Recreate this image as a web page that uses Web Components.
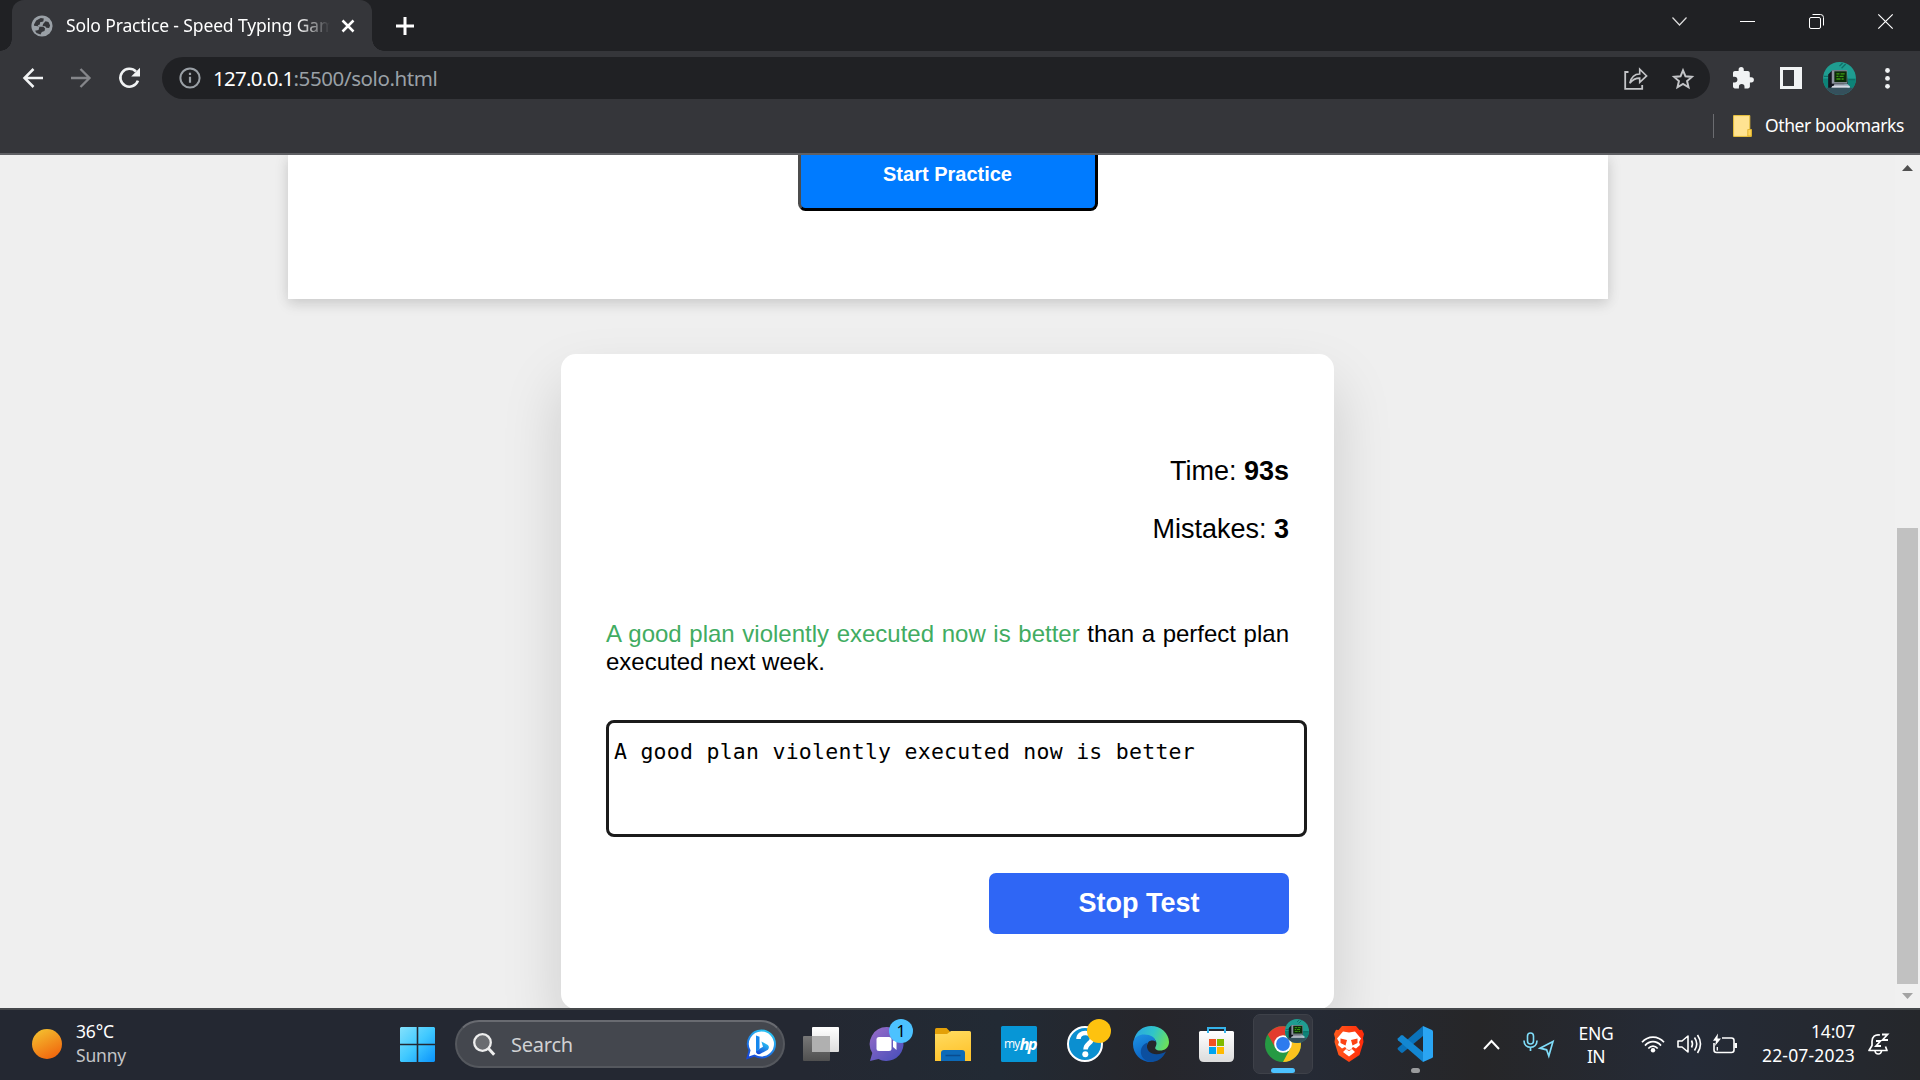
<!DOCTYPE html>
<html lang="en">
<head>
<meta charset="utf-8">
<title>Solo Practice - Speed Typing Game</title>
<style>
  html, body { margin: 0; height: 100%; overflow: hidden; background: #efefef; }
  body { font-family: "Noto Sans", "Open Sans", sans-serif; }
</style>
</head>
<body>
<desktop-screen></desktop-screen>
<script>
const define = (name, html, after) => {
  const tpl = document.createElement('template');
  tpl.innerHTML = html;
  customElements.define(name, class extends HTMLElement {
    connectedCallback() {
      if (this.shadowRoot) return;
      this.attachShadow({ mode: 'open' }).append(tpl.content.cloneNode(true));
      if (after) after(this);
    }
  });
};

const avatar = (id) => `
  <defs><clipPath id="${id}"><circle cx="16" cy="16" r="16"/></clipPath></defs>
  <g clip-path="url(#${id})">
    <rect width="32" height="32" fill="#1f9d91"/>
    <path d="M0 16h32v9H0z" fill="#0d8378"/><path d="M0 25h32v7H0z" fill="#35505c"/>
    <path d="M16 4l3-3M18 6l4-4M5 14H1M25 17h6" stroke="#0f6f68" stroke-width="1.2"/>
    <path d="M5 12l4-4h14l1 13h-4l4 4H5z" fill="#14161f"/>
    <rect x="8.500" y="8" width="15" height="13" fill="#8d93a0"/>
    <rect x="11" y="9" width="12" height="10.500" fill="#0b2a08"/>
    <path d="M13 11.500h3m1 0h4M13 14h2m1 0h4M13 16.500h4m1 0h2" stroke="#3d9b12" stroke-width="1.300"/>
    <path d="M11 21.500h13l2 2H10z" fill="#aeb6c4"/><path d="M9 23.300h17v1.700H8z" fill="#d5dae4"/>
  </g>`;

const ICONS = {
  globe: [22, 22, `<circle cx="11" cy="11" r="10.600" fill="#9aa0a6"/><path d="M3 9.500L5.200 5.600 9.800 3l3 .6-.5 2.800-3.200.8-.3 2.300-2 .8 1 1.400h4.600l1.700 1.700-.6 2.600-2.700.9-1.300 2.600-4-1.400L3 14zM14.500 6.300l3 .6 1.600 3.600-1 2.600-2.700-.3-1.200-1.600-2.600-.3.500-2z" fill="#35363a"/><path d="M1.500 10.500l7 1-1 3.500-4.500 1z" fill="#9aa0a6"/>`],
  tabclose: [14, 14, `<path d="M1.500 1.500l11 11M12.500 1.500l-11 11" stroke="#fff" stroke-width="2.500"/>`],
  plus: [18, 18, `<path d="M9 0v18M0 9h18" stroke="#fff" stroke-width="3"/>`],
  back: [20, 20, `<path d="M20 10H2M10.500 1L1.500 10l9 9" stroke="#f1f3f4" stroke-width="2.500" fill="none"/>`],
  forward: [20, 20, `<path d="M0 10h18M9.500 1l9 9-9 9" stroke="#85868a" stroke-width="2.300" fill="none"/>`],
  reload: [22, 22, `<path d="M18.900 13.600A9 9 0 1 1 17 4.600" stroke="#f1f3f4" stroke-width="2.600" fill="none"/><path d="M21 .8v8.700h-8.800z" fill="#f1f3f4"/>`],
  info: [22, 22, `<circle cx="11" cy="11" r="9.600" stroke="#9aa0a6" stroke-width="2" fill="none"/><path d="M11 9.700v6M11 5.800v2.200" stroke="#9aa0a6" stroke-width="2.200"/>`],
  share: [24, 23, `<path d="M4.500 5H1.200v16.800h17V18" stroke="#c4c5c8" stroke-width="1.800" fill="none"/><path d="M5.800 16.200C7.200 9.800 11 7 15.700 7V2.200l6.900 6.700-6.900 6.400v-4.200c-4.200 0-7.200 1.500-9.900 5.100z" stroke="#c4c5c8" stroke-width="1.600" fill="none"/>`],
  star: [22, 21, `<path d="M11 2.400l2.500 5.900 6.400.6-4.800 4.200 1.400 6.200L11 16l-5.500 3.300 1.400-6.200-4.800-4.200 6.400-.6z" stroke="#c4c5c8" stroke-width="2" fill="none"/>`],
  puzzle: [22, 22, `<path d="M19.300 10.200h-1.500V6c0-1.200-.9-2-2-2h-4V2.700a2.600 2.600 0 0 0-5.200 0V4H2.900C1.800 4 1 4.800 1 6v3.700h1.500a2.900 2.900 0 0 1 0 5.800H1v4c0 1.100.8 1.900 1.900 1.900h4v-1.500a2.800 2.800 0 0 1 5.600 0v1.500h3.400c1.100 0 2-.8 2-1.900v-4.100h1.400a2.600 2.600 0 0 0 0-5.200z" fill="#f1f3f4"/>`],
  panel: [22, 22, `<path d="M0 0h22v22H0zM3 3v16h11V3z" fill="#f1f3f4" fill-rule="evenodd"/>`],
  profile: [33, 33, avatar('a'), '0 0 32 32'],
  dots: [5, 21, `<circle cx="2.500" cy="2.500" r="2.400" fill="#f1f3f4"/><circle cx="2.500" cy="10.400" r="2.400" fill="#f1f3f4"/><circle cx="2.500" cy="18.300" r="2.400" fill="#f1f3f4"/>`],
  bookmark: [19, 22, `<path d="M.6.6h16.200v14h1.500v6.800H.6z" fill="#ffe391" stroke="#ecc43c"/><path d="M14.800 21v-6.500h3.500V21z" fill="#ffd75e" stroke="#d9ab22" stroke-width=".8"/>`],
  search: [15, 9, `<path d="M.5.5l7 7.500 7-7.500" stroke="#ddd" stroke-width="1.200" fill="none"/>`],
  min: [15, 15, `<path d="M0 7.500h15" stroke="#fff"/>`],
  restore: [15, 15, `<rect x=".5" y="3.500" width="11" height="11" rx="1.500" stroke="#fff" fill="none"/><path d="M3.500.5h8a3 3 0 0 1 3 3v8" stroke="#fff" fill="none"/>`],
  close: [15, 15, `<path d="M.3.300l14.400 14.400M14.700.3L.3 14.700" stroke="#fff" stroke-width="1.200"/>`],
  sun: [30, 30, `<defs><linearGradient id="g" x1=".2" y1="0" x2=".7" y2="1"><stop stop-color="#f4c02f"/><stop offset="1" stop-color="#f1650d"/></linearGradient></defs><circle cx="15" cy="15" r="15" fill="url(#g)"/>`],
  windows: [35, 35, `<defs><linearGradient id="g" gradientUnits="userSpaceOnUse" x1="0" y1="0" x2="35" y2="35"><stop stop-color="#84e1fc"/><stop offset=".5" stop-color="#40c9ff"/><stop offset="1" stop-color="#0a93fb"/></linearGradient></defs><path d="M1 0h15.700v16.700H0V1zM18.300 0H34l1 1v15.700H18.300zM0 18.300h16.700V35H1l-1-1zM18.300 18.300H35V34l-1 1H18.300z" fill="url(#g)"/>`],
  find: [22, 23, `<circle cx="9.500" cy="9.500" r="8.300" fill="#6a6c70" stroke="#eee" stroke-width="2.300"/><path d="M15.500 15.500l5.700 6.200" stroke="#eee" stroke-width="3"/>`],
  bing: [30, 31, `<defs><linearGradient id="g" x1=".7" y1="0" x2=".2" y2="1"><stop stop-color="#29c5f5"/><stop offset="1" stop-color="#1648d8"/></linearGradient></defs><path d="M15.500 1.500a13.500 13.500 0 0 1 0 27c-2.600 0-5-.7-7-1.900l-7 2.300 2-7.500a13.500 13.500 0 0 1 12-19.900z" fill="#fff" stroke="url(#g)" stroke-width="2"/><path d="M10 6.500l3.500 1.200v12l-3.500 4z" fill="#1688ee"/><path d="M10 22.800l4-3.200 3-1.800-1.600-5.300 6 3.200c2 1.200 1.800 3.600.5 5L14 25c-2 .8-3.600 0-4-2.200z" fill="url(#g)"/>`],
  taskview: [36, 36, `<defs><linearGradient id="g" x2="0" y2="1"><stop stop-color="#fff"/><stop offset="1" stop-color="#ddd"/></linearGradient><linearGradient id="h" x2="0" y2="1"><stop stop-color="#777"/><stop offset="1" stop-color="#505050"/></linearGradient></defs><rect x="0" y="10" width="27" height="25" rx="1" fill="url(#h)"/><rect x="9" y="1" width="27" height="25" rx="1" fill="url(#g)"/><rect x="9" y="10" width="18" height="16" fill="#b0b0b0"/>`],
  teams: [36, 36, `<defs><linearGradient id="g" x2=".8" y2="1"><stop stop-color="#9a6cc8"/><stop offset="1" stop-color="#4b50bb"/></linearGradient></defs><path d="M18 1a17 17 0 1 1-8.500 32L1 35l2.300-8A17 17 0 0 1 18 1z" fill="url(#g)"/><rect x="7.500" y="11" width="15" height="14" rx="2.500" fill="#fff"/><path d="M24 15l3.500-3v12L24 21z" fill="#fff"/>`],
  explorer: [36, 36, `<defs><linearGradient id="g" x2=".3" y2="1"><stop stop-color="#ffdc62"/><stop offset="1" stop-color="#ffc42e"/></linearGradient></defs><path d="M0 3.500Q0 2 1.500 2h10L15 5.500V12H0z" fill="#e3a008"/><path d="M0 8h12l4-3h18.500Q36 5 36 6.500V35H0z" fill="url(#g)"/><path d="M6 35v-8q0-3 3-3h18q3 0 3 3v8z" fill="#0d6ab8"/><path d="M10.500 29.500h15" stroke="#0a4c8f" stroke-width="1.500"/>`],
  hp: [36, 36, `<rect width="36" height="36" rx="1.500" fill="#0796d6"/>`],
  help: [36, 36, `<circle cx="18" cy="18" r="17" fill="#0b8fd0" stroke="#fff" stroke-width="2"/><path d="M11.500 13c0-8 13.500-8 13.500-.5 0 4.800-6.500 5-6.500 11" stroke="#fff" stroke-width="4.500" fill="none"/><circle cx="18.300" cy="28.300" r="3" fill="#fff"/><circle cx="32" cy="5" r="12" fill="#fec20f"/>`],
  edge: [36, 36, `<defs><linearGradient id="g" x1="0" y1=".3" x2="1" y2=".6"><stop stop-color="#2aa6e2"/><stop offset=".5" stop-color="#30c5c9"/><stop offset="1" stop-color="#6ce05a"/></linearGradient><linearGradient id="h" x2=".4" y2="1"><stop stop-color="#1e93e4"/><stop offset="1" stop-color="#0a5fc0"/></linearGradient></defs><path d="M1 14C3 5 10 0 18 0c10 0 18 7.500 18 16 0 6-4.500 8.500-9 8.500-4 0-5.500-2-4.500-3.500 3-5-1-10.500-8-10.500C7 10.500 3 12 1 14z" fill="url(#g)"/><path d="M0 18C0 11 6 8.500 11.500 8.500c6 0 10.800 3 11.300 7.300C21 14 17 14 15.500 16c-5 7 2 15.500 9 15.500-2 3-4.500 4.500-6.500 4.500C7.500 36 0 28 0 18z" fill="url(#h)"/><path d="M14.500 16.500C11 28 24 31 33 25.500 30 32 24.500 36 18 36 10 35 6 28 8.500 22c1-2.500 3-4.500 6-5.500z" fill="#0c4f9f"/>`],
  store: [36, 36, `<defs><linearGradient id="g" x2="0" y2="1"><stop stop-color="#fff"/><stop offset="1" stop-color="#dcdcdc"/></linearGradient></defs><path d="M9 9V2h17v7" stroke="#35b3ea" stroke-width="2" fill="none"/><path d="M0 6.500Q0 5 1.500 5h32Q35 5 35 6.500V31q0 5-5 5H5q-5 0-5-5z" fill="url(#g)"/><path d="M9 7V4M26 7V4" stroke="#35b3ea" stroke-width="2"/><path d="M10 13h7v7h-7z" fill="#f25022"/><path d="M18 13h7v7h-7z" fill="#7fba00"/><path d="M10 21h7v7h-7z" fill="#00a4ef"/><path d="M18 21h7v7h-7z" fill="#ffb900"/>`],
  chrome: [36, 36, `<circle cx="18" cy="18" r="18" fill="#269a43"/><path d="M18 9.500H34q2 5 2 8.500A18 18 0 0 1 18 36l7.500-14z" fill="#fcc31e"/><path d="M2.800 8.500A18 18 0 0 1 33.800 9.500H18L10.500 22z" fill="#e33b2e"/><circle cx="18" cy="18" r="8.800" fill="#fff"/><circle cx="18" cy="18" r="6.900" fill="#2d7bee"/><svg x="20" y="-7" width="24" height="24" viewBox="0 0 32 32">${avatar('a')}</svg>`],
  brave: [36, 36, `<defs><linearGradient id="g"><stop stop-color="#ff5a1c"/><stop offset="1" stop-color="#ff2a0a"/></linearGradient></defs><path d="M11 0h14l3.500 4 2.500-.3L33 8l-1 4 .5 4-4 13-10.500 7L7.500 29l-4-13 .5-4-1-4 2-4.300 2.500.3z" fill="url(#g)"/><path d="M12 5.500l6 1 6-1 6 7-2 3.500 1 3-4 3.500-3-1.500-1.500 1.500 3.500 3.500-6 4.500-6-4.500 3.500-3.500L14 21l-3 1.500L7 19l1-3-2-3.500z" fill="#fff"/><path d="M9.500 12.500l6.500 1.500-1.500 5.500-5-2.500zM26.500 12.500L20 14l1.500 5.500 5-2.500zM14.500 23l3.500 1 3.500-1-3.500 2z" fill="#fc4214"/>`],
  vscode: [36, 36, `<path d="M26 0l9 4q1 .5 1 1.500v25q0 1-1 1.500l-9 4z" fill="#2aa5f3"/><path d="M26 0v10L6 26.500q-1 .8-2 0l-3-2.700q-1-1 0-2z" fill="#0a72ba"/><path d="M26 36V26L6 9.500q-1-.8-2 0l-3 2.700q-1 1 0 2z" fill="#1387d2"/>`],
  up: [17, 11, `<path d="M1 10l7.500-8 7.500 8" stroke="#fff" stroke-width="2" fill="none"/>`],
  mic: [32, 25, `<rect x="4.500" y="1" width="6" height="11" rx="3" stroke="#7fdcf8" stroke-width="1.600" fill="none"/><path d="M1 8.500c0 9 13 9 13 0M7.500 15.300V19" stroke="#7fdcf8" stroke-width="1.700" fill="none"/><path d="M30 9.500L17 16.200l6.600 1.600 2.200 6.200z" stroke="#7fdcf8" stroke-width="1.700" fill="none"/>`],
  wifi: [24, 18, `<path d="M1 7.300c6-7 16-7 22 0M4 10.600c4.500-5.200 11.500-5.200 16 0M7.300 13.500c2.800-3.200 6.600-3.200 9.400 0" stroke="#fff" stroke-width="1.700" fill="none"/><circle cx="12" cy="15.300" r="2.200" fill="#fff"/>`],
  volume: [25, 20, `<path d="M1 7h4l6-5v16l-6-5H1z" stroke="#fff" stroke-width="1.600" fill="none" stroke-linejoin="round"/><path d="M14.500 6.500q2 3.500 0 7M17.500 3.500q4.500 6.500 0 13M20.500 1q6 9 0 18" stroke="#fff" stroke-width="1.600" fill="none"/>`],
  battery: [24, 20, `<path d="M9 4h9.500Q21 4 21 6.500v9.500q0 2.500-2.500 2.500H3.500Q1 18.500 1 16V9" stroke="#fff" stroke-width="1.600" fill="none"/><path d="M21.500 9H24v5h-2.500z" fill="#fff"/><path d="M5-.5L0 6.800h3L2 12l6-7.500H4.500z" fill="#fff"/><path d="M4.300 13v3.500" stroke="#fff" stroke-width="1.300"/>`],
  bell: [21, 22, `<path d="M12 2C7 1 4 4 4 8.500v4L1 17.500h18l-1.500-4" stroke="#fff" stroke-width="1.700" fill="none" stroke-linejoin="round"/><path d="M7 18c.5 4 6 4 6.500 0" stroke="#fff" stroke-width="1.600" fill="none"/><path d="M14 1.500h5.500L14.500 7H20M8 8h4.500L8 13h5" stroke="#fff" stroke-width="1.800" fill="none"/>`],
  sbup: [11, 6, `<path d="M0 6L5.500 0 11 6z" fill="#505050"/>`],
  sbdown: [11, 6, `<path d="M0 0h11L5.500 6z" fill="#a3a3a3"/>`]
};

/* <ui-icon name> : inline SVG at its natural size */
customElements.define('ui-icon', class extends HTMLElement {
  connectedCallback() {
    if (this.shadowRoot) return;
    const [w, h, body, vb] = ICONS[this.getAttribute('name')];
    this.attachShadow({ mode: 'open' }).innerHTML =
      `<style>:host{display:block;flex:none;width:${w}px;height:${h}px}svg{display:block;overflow:visible}</style>
       <svg width="${w}" height="${h}" viewBox="${vb || `0 0 ${w} ${h}`}">${body}</svg>`;
  }
});

/* <fit-text w> : one line of text, tracked so that it takes w pixels */
define('fit-text', `<style>:host{display:block;flex:none;white-space:pre;width:max-content}span{display:inline-block}</style><span><slot></slot></span>`, el => {
  const span = el.shadowRoot.querySelector('span');
  const n = el.textContent.length;
  const w = +el.getAttribute('w');
  if (w) span.style.letterSpacing = ((w - span.getBoundingClientRect().width) / n) + 'px';
});

define('tab-strip', `<style>
  :host{display:flex;height:51px;background:#202124;padding-left:12px;color:#fff;font-size:17.500px;flex:none}
  .tab{display:flex;align-items:center;width:360px;height:51px;box-sizing:border-box;padding:0 17px 0 19px;background:#35363a;border-radius:12px 12px 0 0;position:relative}
  .tab::before,.tab::after{content:"";position:absolute;bottom:0;width:12px;height:12px}
  .tab::before{left:-12px;background:radial-gradient(circle at 0 0,#202124 11.500px,#35363a 12px)}
  .tab::after{right:-12px;background:radial-gradient(circle at 100% 0,#202124 11.500px,#35363a 12px)}
  .title{width:264px;margin:-2px 0 0 13px;overflow:hidden;line-height:30px;-webkit-mask:linear-gradient(90deg,#000 232px,transparent 264px);mask:linear-gradient(90deg,#000 232px,transparent 264px)}
  .x{margin-left:auto}
  .plus{margin:17px 0 0 24px}
  .win{margin-left:auto;display:flex;padding:14px 27px 0 0}
  .win .c{margin:3px 53px 0 0}.win .m{margin-right:54px}.win .r{margin-right:54px}
</style>
<div class="tab"><ui-icon name="globe"></ui-icon><div class="title"><fit-text w="279">Solo Practice - Speed Typing Game</fit-text></div><ui-icon class="x" name="tabclose"></ui-icon></div>
<ui-icon class="plus" name="plus"></ui-icon>
<div class="win"><ui-icon class="c" name="search"></ui-icon><ui-icon class="m" name="min"></ui-icon><ui-icon class="r" name="restore"></ui-icon><ui-icon name="close"></ui-icon></div>`);

define('tool-bar', `<style>
  :host{display:flex;align-items:center;height:54px;padding:0 30px 0 23px;background:#35363a;flex:none}
  .f{margin-left:28px}.r{margin-left:28px}
  .omni{display:flex;align-items:center;flex:1;height:42px;border-radius:21px;background:#202124;margin:0 22px 0 21px;padding:0 16px 0 17px;color:#fff;font-size:20.500px;line-height:40px}
  .omni span{display:flex;flex:1;margin-left:12px}
  .path{color:#9aa0a6}
  .s{margin-left:24px}
  .p{margin-left:26px}.a{margin-left:21px}.d{margin-left:29px}
</style>
<ui-icon name="back"></ui-icon><ui-icon class="f" name="forward"></ui-icon><ui-icon class="r" name="reload"></ui-icon>
<div class="omni"><ui-icon name="info"></ui-icon><span><fit-text w="80.500">127.0.0.1</fit-text><fit-text class="path" w="144">:5500/solo.html</fit-text></span><ui-icon name="share"></ui-icon><ui-icon class="s" name="star"></ui-icon></div>
<ui-icon name="puzzle"></ui-icon><ui-icon class="p" name="panel"></ui-icon><ui-icon class="a" name="profile"></ui-icon><ui-icon class="d" name="dots"></ui-icon>`);

define('bookmark-bar', `<style>
  :host{display:flex;align-items:center;justify-content:flex-end;box-sizing:border-box;height:50px;padding:0 16px 7px 0;background:#35363a;border-bottom:2px solid #5f6064;color:#fff;font-size:17.500px;line-height:30px;flex:none}
  i{width:1px;height:24px;background:#6b6c70;margin-right:19px}
  ui-icon{margin-right:13px}
  fit-text{margin-top:-2px}
</style><i></i><ui-icon name="bookmark"></ui-icon><fit-text w="139">Other bookmarks</fit-text>`);

define('start-panel', `<style>
  :host{display:flex;justify-content:center;align-items:flex-start;width:1320px;height:144px;background:#fff;box-shadow:0 6px 12px rgba(0,0,0,.1),0 0 15px rgba(0,0,0,.08);flex:none}
  button{box-sizing:border-box;width:300px;height:76px;margin-top:-20px;padding:2px 0 0;border:3px outset #000;border-color:#4c4c4c #000 #000 #4c4c4c;border-radius:7.500px;background:#007bff;color:#fff;font:bold 20px/23px "Liberation Sans",Arial,sans-serif}
</style><button><slot></slot></button>`);

define('test-card', `<style>
  :host{display:flex;flex-direction:column;box-sizing:border-box;width:773px;height:655px;margin-top:55px;padding:102px 45px 0;background:#fff;border-radius:15px;box-shadow:0 30px 60px rgba(0,0,0,.15);font:27px/31px "Liberation Sans",Arial,sans-serif;color:#000;flex:none}
  .stat{text-align:right;margin-bottom:27px}
  p{margin:48px 0 0;height:56px;font-size:24px;line-height:28px;text-align:justify}
  em{font-style:normal;color:#41ac62}
  .input{box-sizing:border-box;width:701px;height:117px;margin-top:44px;padding:15px 5px;border:3px solid #1b1b1b;border-radius:8px;font:21.500px/28px "DejaVu Sans Mono","Liberation Mono",monospace}
  button{align-self:flex-end;width:300px;height:61px;margin-top:36px;padding:0;border:0;border-radius:7px;background:#2f66f5;color:#fff;font:bold 27px/31px "Liberation Sans",Arial,sans-serif}
</style>
<div class="stat">Time: <b>93s</b></div>
<div class="stat">Mistakes: <b>3</b></div>
<p><em>A good plan violently executed now is better</em> than a perfect plan executed next week.</p>
<div class="input"><fit-text w="581">A good plan violently executed now is better</fit-text></div>
<button>Stop Test</button>`);

define('scroll-bar', `<style>
  :host{display:flex;flex-direction:column;align-items:center;box-sizing:border-box;width:25px;padding:10px 0 9px;background:#f0f0f0;flex:none}
  i{width:21px;height:456px;margin:auto 0 9px;background:#c1c1c1}
</style><ui-icon name="sbup"></ui-icon><i></i><ui-icon name="sbdown"></ui-icon>`);

define('page-view', `<style>
  :host{display:flex;height:853px;overflow:hidden;background:#efefef;flex:none}
  main{flex:1;display:flex;flex-direction:column;align-items:center;overflow:hidden}
</style><main><start-panel>Start Practice</start-panel><test-card></test-card></main><scroll-bar></scroll-bar>`);

define('search-pill', `<style>
  :host{display:flex;align-items:center;box-sizing:border-box;width:330px;height:48px;border:2px solid #55585e;border-top-color:#696b71;border-radius:24px;background:#44474e;padding:0 7px 0 16px;color:#d0d1d3;font-size:20px;line-height:40px;flex:none}
  fit-text{margin:1px 0 0 16px;flex:1}
</style><ui-icon name="find"></ui-icon><fit-text w="62">Search</fit-text><ui-icon name="bing"></ui-icon>`);

define('task-bar', `<style>
  :host{display:flex;align-items:center;box-sizing:border-box;height:72px;border-top:2px solid #45484b;padding:0 31px 2px 32px;background:linear-gradient(90deg,#242832 0,#242832 42%,#222a34 52%,#26262b 60%,#252a35 68%,#262628 77%,#252b37 88%,#25272b 100%);color:#fff;font-size:17.500px;line-height:24px;flex:none}
  .weather{margin:-2px 0 0 14px;width:324px}.dim{color:#c3c4c6}
  search-pill{margin:0 18px 0 20px}
  .apps{display:flex;gap:30px}
  .cell{position:relative;width:36px;height:36px}
  .badge{position:absolute;left:20px;top:-7px;width:24px;height:24px;border-radius:12px;background:#4cc2ff;color:#000;font-size:16px;text-align:center}
  .hp{position:absolute;left:3px;top:6px;font:12px/24px "Open Sans",sans-serif;display:flex;letter-spacing:-.8px}
  .hp b{font-style:italic;font-size:16.500px;line-height:23px;letter-spacing:-1.800px}
  .active::before{content:"";position:absolute;box-sizing:border-box;left:-12px;top:-12px;width:60px;height:60px;border:1px solid #3e4149;border-radius:7px;background:#343740}
  .active ui-icon{position:relative}
  .active::after{content:"";position:absolute;left:6px;top:42px;width:24px;height:5px;border-radius:3px;background:#4cc2ff}
  .run::after{content:"";position:absolute;left:14px;top:42px;width:9px;height:5px;border-radius:3px;background:#9a9b9d}
  .up{margin-left:50px}.mic{margin:0 0 0 23px}
  .lang{margin:1px 0 0 23px;line-height:23px;width:36px;display:flex;flex-direction:column;align-items:center}
  .wifi{margin-left:27px}.vol{margin-left:12px}.bat{margin-left:11px}
  .clock{margin:-2px 0 0 auto;display:flex;flex-direction:column;align-items:flex-end}
  .bell{margin-left:13px}
</style>
<ui-icon name="sun"></ui-icon>
<div class="weather"><fit-text w="38">36°C</fit-text><fit-text class="dim" w="50">Sunny</fit-text></div>
<ui-icon name="windows"></ui-icon>
<search-pill></search-pill>
<div class="apps">
<div class="cell"><ui-icon name="taskview"></ui-icon></div>
<div class="cell"><ui-icon name="teams"></ui-icon><span class="badge">1</span></div>
<div class="cell"><ui-icon name="explorer"></ui-icon></div>
<div class="cell"><ui-icon name="hp"></ui-icon><span class="hp">my<b>hp</b></span></div>
<div class="cell"><ui-icon name="help"></ui-icon></div>
<div class="cell"><ui-icon name="edge"></ui-icon></div>
<div class="cell"><ui-icon name="store"></ui-icon></div>
<div class="cell active"><ui-icon name="chrome"></ui-icon></div>
<div class="cell"><ui-icon name="brave"></ui-icon></div>
<div class="cell run"><ui-icon name="vscode"></ui-icon></div>
</div>
<ui-icon class="up" name="up"></ui-icon>
<ui-icon class="mic" name="mic"></ui-icon>
<div class="lang"><fit-text w="35">ENG</fit-text><fit-text w="18">IN</fit-text></div>
<ui-icon class="wifi" name="wifi"></ui-icon><ui-icon class="vol" name="volume"></ui-icon><ui-icon class="bat" name="battery"></ui-icon>
<div class="clock"><fit-text w="44">14:07</fit-text><fit-text w="93">22-07-2023</fit-text></div>
<ui-icon class="bell" name="bell"></ui-icon>`);

define('desktop-screen', `<style>:host{display:flex;flex-direction:column;width:1920px;height:1080px;overflow:hidden}</style>
<tab-strip></tab-strip><tool-bar></tool-bar><bookmark-bar></bookmark-bar><page-view></page-view><task-bar></task-bar>`);
</script>
</body>
</html>
